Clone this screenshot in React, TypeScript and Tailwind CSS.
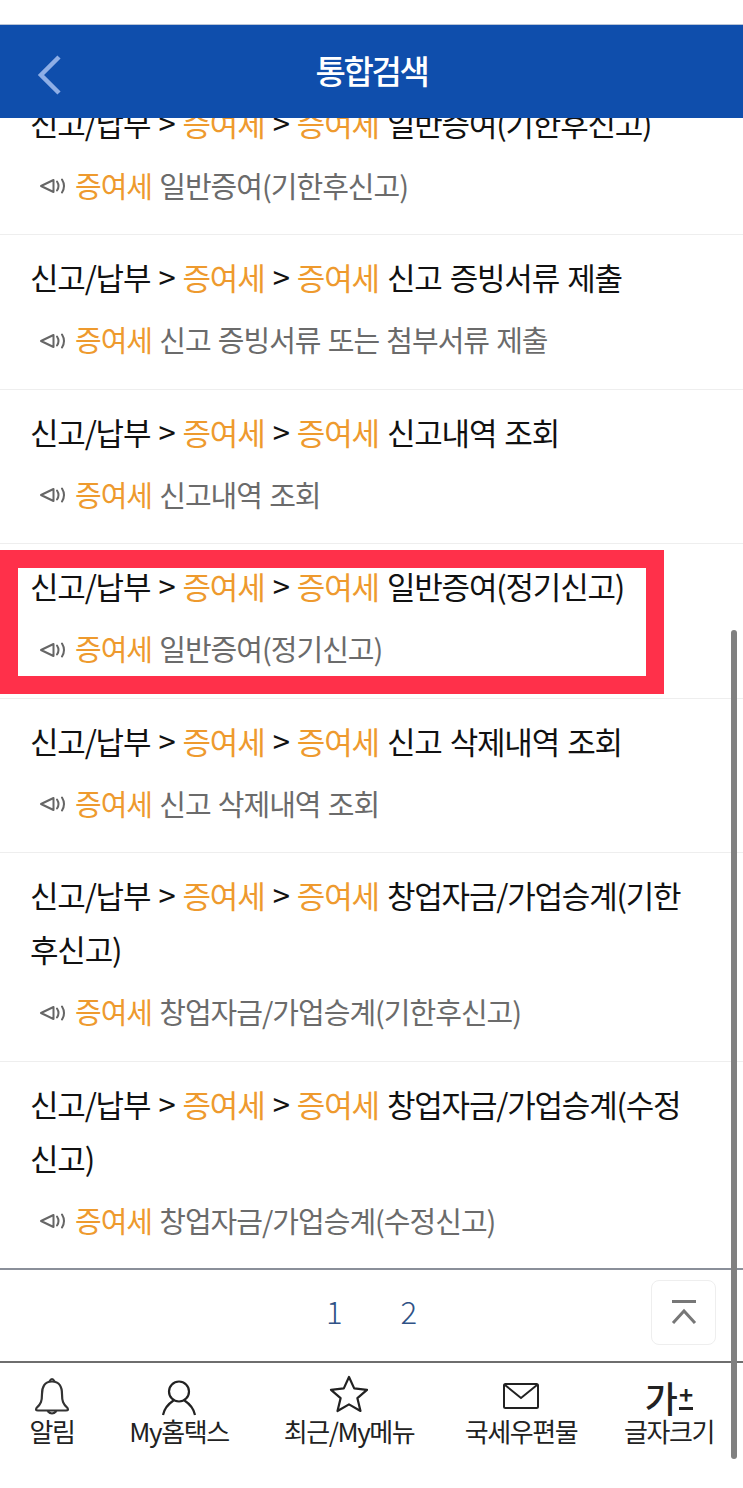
const font = { fontFamily: '"Noto Sans CJK KR", "Noto Sans", sans-serif' };

const rows = [
  '일반증여(기한후신고)',
  '신고 증빙서류 제출|신고 증빙서류 또는 첨부서류 제출',
  '신고내역 조회',
  '일반증여(정기신고)',
  '신고 삭제내역 조회',
  '창업자금/가업승계(기한후신고)',
  '창업자금/가업승계(수정신고)',
];

function Speaker() {
  return (
    <svg width="28" height="20" viewBox="0 0 28 20" fill="none" stroke="#666" className="mr-[8px] mt-[3px] shrink-0">
      <path d="M2 10 L14.5 4 V16 Z" strokeWidth="2" strokeLinejoin="round" />
      <path d="M18 5.5 Q21 10 18 14.5" strokeWidth="2" strokeLinecap="round" />
      <path d="M23 3.5 Q27 10 23 16.5" strokeWidth="2" strokeLinecap="round" />
    </svg>
  );
}

function Row({ text, highlight }: { text: string; highlight?: boolean }) {
  const [title, sub] = text.includes('|') ? text.split('|') : [text, text];
  return (
    <div className="relative border-b border-[#eeeeee] pl-[30px] pr-[40px] pt-[15px] pb-[29.5px]">
      <div className="text-[31px] leading-[54px] tracking-[-1.2px] [word-spacing:2.4px] text-[#111111]">
        신고/납부 &gt; <span className="text-[#ee9a2e]">증여세</span> &gt;{' '}
        <span className="text-[#ee9a2e]">증여세</span> {title}
      </div>
      <div className="mt-[15px] flex h-[40px] items-center pl-[9px] text-[29px] leading-[40px] tracking-[-1px] [word-spacing:1.7px] text-[#6b6b6b]">
        <Speaker />
        <span className="whitespace-pre">
          <span className="text-[#ee9a2e]">증여세</span> {sub}
        </span>
      </div>
      {highlight && (
        <div className="absolute left-0 top-[5.5px] h-[144px] w-[664px] border-[18px] border-[#ff304a]" />
      )}
    </div>
  );
}

function Bell() {
  return (
    <svg width="36" height="40" viewBox="0 0 36 40" fill="none" stroke="#333" strokeWidth="2.2">
      <path d="M18 5.5 C10.5 5.5 8 11 8 18 C8 25 7 28 2.5 32 Q1 34.5 4 34.5 H32 Q35 34.5 33.5 32 C29 28 28 25 28 18 C28 11 25.5 5.5 18 5.5 Z" strokeLinejoin="round" />
      <path d="M15.5 5.5 Q18 0.5 20.5 5.5" />
      <path d="M13.5 35 Q18 40 22.5 35" />
    </svg>
  );
}

function User() {
  return (
    <svg width="36" height="36" viewBox="0 0 36 36" fill="none" stroke="#222" strokeWidth="2.2">
      <circle cx="18" cy="11.5" r="10" />
      <path d="M2 35 C3.5 27 8 23.5 12.5 20.5 M34 35 C32.5 27 28 23.5 23.5 20.5" />
    </svg>
  );
}

function Star() {
  return (
    <svg width="40" height="38" viewBox="0 0 40 38" fill="none" stroke="#222" strokeWidth="2.2" strokeLinejoin="round">
      <path d="M20 2 L25.2 13.4 L38 14.8 L28.4 23.2 L31.5 36 L20 29.4 L8.5 36 L11.6 23.2 L2 14.8 L14.8 13.4 Z" />
    </svg>
  );
}

function Mail() {
  return (
    <svg width="36" height="26" viewBox="0 0 36 26" fill="none" stroke="#222" strokeWidth="2">
      <rect x="1" y="1" width="34" height="24" rx="1.5" />
      <path d="M2 2 L18 15 L34 2" />
    </svg>
  );
}

const navLabel = '-mt-[3px] text-[26px] leading-[34px] tracking-[-1.4px] text-[#222222] whitespace-nowrap';

export default function App() {
  return (
    <div className="relative h-[1488px] w-[743px] overflow-hidden bg-white" style={font}>
      <div className="h-[24px] bg-white" />
      <header className="relative flex h-[94px] items-center justify-center border-t border-[#b9c4d6] bg-[#0f4eac]">
        <svg width="26" height="40" viewBox="0 0 26 40" fill="none" stroke="#8eaee6" strokeWidth="4.5" className="absolute left-[37px] top-[30px]">
          <path d="M22 2 L4 20 L22 38" />
        </svg>
        <h1 className="-mt-[3px] text-[33px] font-medium leading-[44px] tracking-[-2.4px] text-white">통합검색</h1>
      </header>

      <div className="h-[1150px] overflow-hidden">
        <div className="-mt-[37.5px]">
          {rows.map((r, i) => (
            <Row key={r} text={r} highlight={i === 3} />
          ))}
        </div>
      </div>

      <div className="relative flex h-[93px] items-center justify-center gap-[58px] border-t-2 border-[#8a8f99] pb-[10px] text-[31px] leading-[40px] text-[#2f5286]">
        <span className="font-light">1</span>
        <span className="font-light">2</span>
        <div className="absolute left-[651px] top-[10px] flex h-[65px] w-[65px] flex-col items-center justify-center gap-[5px] rounded-[8px] border border-[#eeeeee] pb-[2px]">
          <div className="h-[3px] w-[24px] bg-[#777777]" />
          <svg width="26" height="16" viewBox="0 0 26 16" fill="none" stroke="#777" strokeWidth="3">
            <path d="M2 15 L13 3 L24 15" />
          </svg>
        </div>
      </div>

      <nav className="grid grid-cols-[104px_150px_190px_154px_142px] border-t-2 border-[#6e6e6e]">
        <div className="flex flex-col items-center">
          <div className="flex h-[54px] items-end pb-[1px]"><Bell /></div>
          <span className={navLabel}>알림</span>
        </div>
        <div className="flex flex-col items-center">
          <div className="flex h-[54px] items-end pb-[1px]"><User /></div>
          <span className={navLabel}>My홈택스</span>
        </div>
        <div className="flex flex-col items-center">
          <div className="flex h-[54px] items-end pb-[4px]"><Star /></div>
          <span className={navLabel}>최근/My메뉴</span>
        </div>
        <div className="flex flex-col items-center">
          <div className="flex h-[54px] items-end pb-[8px]"><Mail /></div>
          <span className={navLabel}>국세우편물</span>
        </div>
        <div className="flex flex-col items-center">
          <div className="flex h-[54px] items-end pb-[1px] text-[#222222]">
            <span className="text-[36px] font-medium leading-[38px]">가</span>
            <span className="ml-[1px] flex flex-col items-center pb-[6px]">
              <span className="text-[24px] font-bold leading-[14px]">+</span>
              <span className="mt-[6px] h-[3px] w-[14px] bg-[#222222]" />
            </span>
          </div>
          <span className={navLabel}>글자크기</span>
        </div>
      </nav>

      <div className="absolute left-[731px] top-[630px] h-[829px] w-[6px] rounded-full bg-[#808080]" />
    </div>
  );
}
